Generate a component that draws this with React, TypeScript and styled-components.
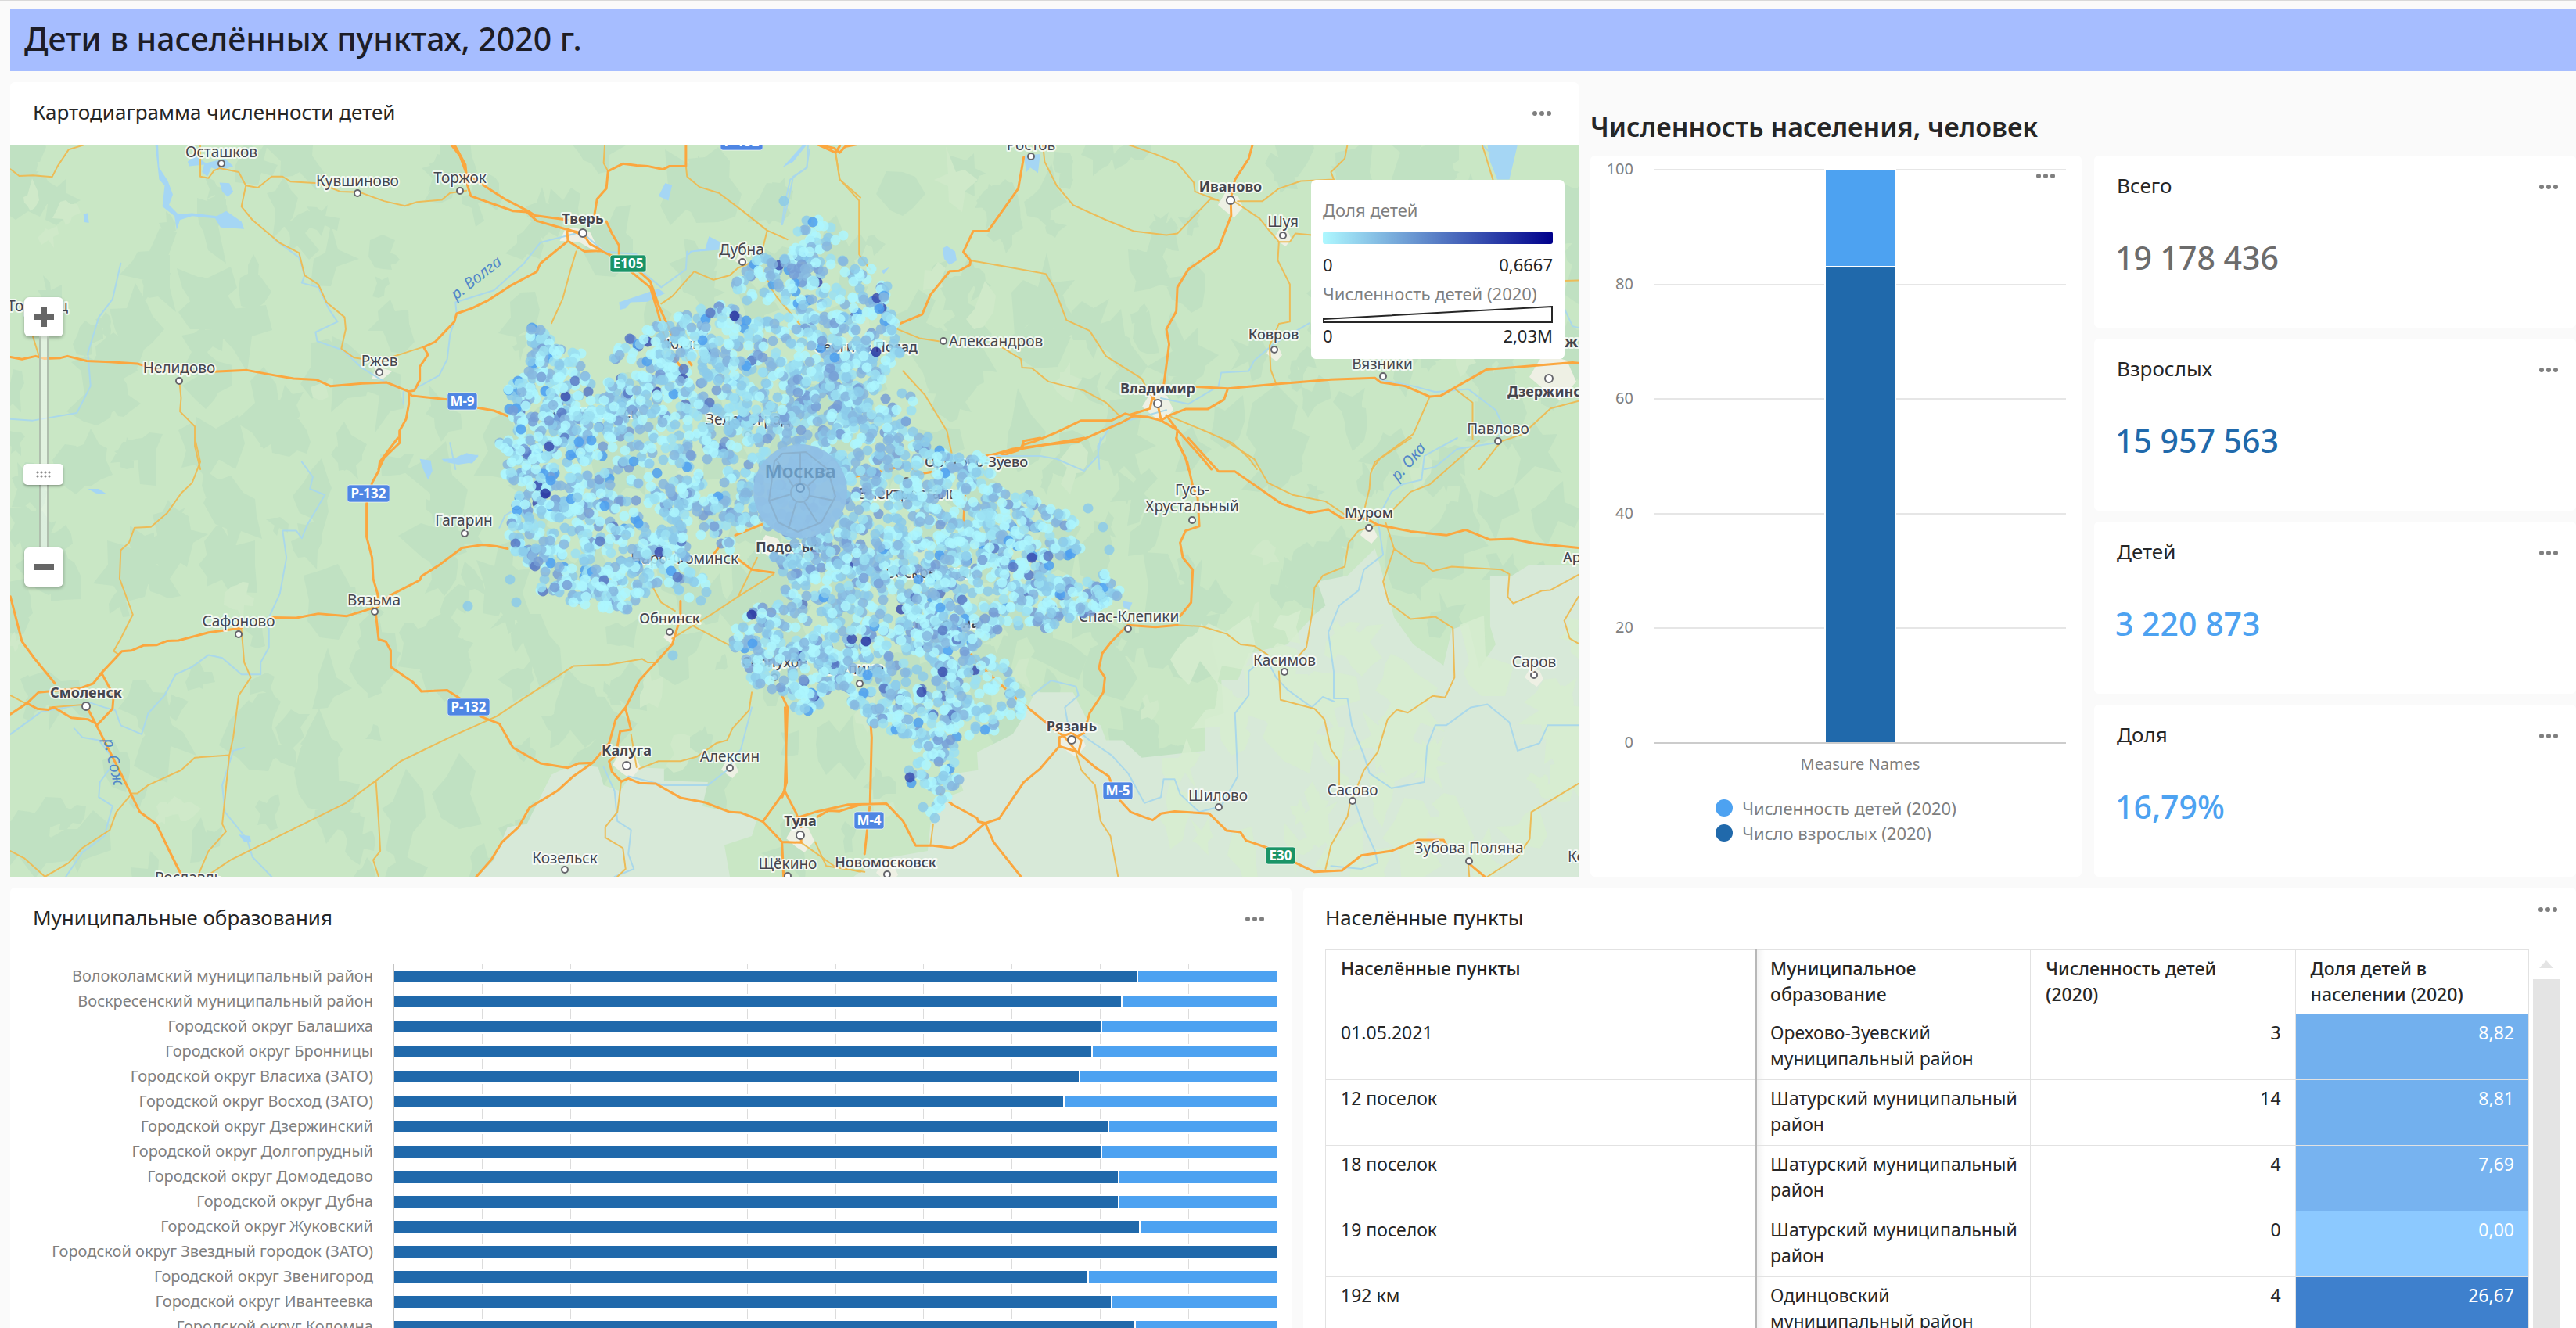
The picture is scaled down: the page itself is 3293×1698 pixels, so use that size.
import React from 'react';
import styled, { createGlobalStyle } from 'styled-components';

const GlobalStyle = createGlobalStyle`
  *, *::before, *::after { box-sizing: border-box; }
  body {
    margin: 0;
    background: #fafafa;
    color: #262626;
    font-family: "Noto Sans", "Open Sans", sans-serif;
  }
  h1, h2, h3, p, ul, dl, dd, dt { margin: 0; padding: 0; }
  ul { list-style: none; }
`;

const DARK = '#2069ab';
const LIGHT = '#4da2f1';

/* ---------- page ---------- */

const Page = styled.div`
  height: 100vh;
  overflow: hidden;
  display: flex;
  flex-direction: column;
  gap: 14px;
  padding: 11px 0 0 13px;
  border-top: 1px solid #d9d9d9;
`;

const Banner = styled.header`
  flex: none;
  height: 79px;
  display: flex;
  align-items: center;
  padding: 0 18px 6px;
  background: #a6bdff;
`;

const BannerTitle = styled.h1`
  font-size: 41px;
  line-height: 56px;
  font-weight: 500;
  color: #1d1d27;
`;

const TopGrid = styled.div`
  flex: none;
  display: grid;
  grid-template-columns: minmax(0, 2005fr) minmax(0, 1260fr);
  column-gap: 15px;
`;

const BottomGrid = styled.div`
  flex: none;
  display: grid;
  grid-template-columns: minmax(0, 1638fr) minmax(0, 1627fr);
  column-gap: 15px;
`;

const Card = styled.section`
  background: #fff;
  border-radius: 6px;
  overflow: hidden;
`;

const MapCard = styled(Card)`
  border-radius: 6px 6px 0 0;
`;

const CardHead = styled.div<{ $right?: number; $left?: number }>`
  display: flex;
  align-items: center;
  justify-content: space-between;
  height: 80px;
  padding: 0 ${p => p.$right ?? 35}px 0 ${p => p.$left ?? 29}px;
`;

const CardTitle = styled.h3`
  padding-bottom: 4px;
  font-size: 26px;
  line-height: 36px;
  font-weight: 400;
`;

const MenuButton = styled.button<{ $lift?: boolean }>`
  display: flex;
  align-items: center;
  justify-content: center;
  width: 24px;
  height: 24px;
  padding: 0;
  border: 0;
  background: none;
  align-self: ${p => (p.$lift ? 'flex-start' : 'center')};
  margin-top: ${p => (p.$lift ? 16 : 0)}px;
`;

function Menu({ lift }: { lift?: boolean }) {
  return (
    <MenuButton type="button" aria-label="Меню" $lift={lift}>
      <svg width="24" height="6" viewBox="0 0 24 6" fill="#7f7f7f">
        <circle cx="3" cy="3" r="3" />
        <circle cx="12" cy="3" r="3" />
        <circle cx="21" cy="3" r="3" />
      </svg>
    </MenuButton>
  );
}

/* ---------- map ---------- */

const MapFrame = styled.div`
  position: relative;
  height: 936px;
  overflow: hidden;
  background: #c9e7c5;
`;

const MapCanvas = styled.svg`
  display: block;
  width: 100%;
  height: 100%;
`;

const CityText = styled.text`
  paint-order: stroke;
  stroke: #ffffff;
  stroke-opacity: 0.75;
  stroke-width: 4px;
  stroke-linejoin: round;
  fill: #45454e;
`;

const BadgeText = styled.text`
  font-size: 17px;
  font-weight: 700;
  fill: #fff;
  text-anchor: middle;
`;

const RiverText = styled.text`
  font-size: 20px;
  font-style: italic;
  fill: #5288c8;
`;

function makeRandom(seed: number) {
  let a = seed;
  return () => {
    a = (a + 0x6d2b79f5) | 0;
    let t = Math.imul(a ^ (a >>> 15), 1 | a);
    t = (t + Math.imul(t ^ (t >>> 7), 61 | t)) ^ t;
    return ((t ^ (t >>> 14)) >>> 0) / 4294967296;
  };
}

type Pt = [number, number];

function inside([x, y]: Pt, poly: Pt[]) {
  let hit = false;
  for (let i = 0, j = poly.length - 1; i < poly.length; j = i++) {
    const [xi, yi] = poly[i];
    const [xj, yj] = poly[j];
    if (yi > y !== yj > y && x < ((xj - xi) * (y - yi)) / (yj - yi) + xi) hit = !hit;
  }
  return hit;
}

const REGION: Pt[] = [
  [1009, 284], [1039, 276], [1066, 285], [1080, 300], [1064, 312], [1064, 327], [1088, 337], [1114, 330],
  [1120, 340], [1112, 360], [1142, 368], [1133, 387], [1139, 403], [1150, 422], [1145, 437], [1153, 457],
  [1147, 480], [1127, 490], [1118, 503], [1140, 502], [1164, 498], [1171, 517], [1158, 537], [1180, 549],
  [1190, 563], [1205, 573], [1209, 582], [1234, 581], [1256, 581], [1268, 603], [1282, 620], [1286, 636],
  [1319, 630], [1335, 650], [1365, 650], [1378, 665], [1368, 680], [1384, 705], [1345, 718], [1352, 740],
  [1390, 742], [1415, 730], [1433, 742], [1433, 763], [1414, 777], [1379, 787], [1338, 805], [1280, 804],
  [1262, 824], [1247, 824], [1234, 842], [1291, 834], [1309, 849], [1304, 873], [1309, 914], [1282, 920],
  [1276, 940], [1242, 946], [1220, 947], [1222, 977], [1227, 1000], [1215, 1022], [1200, 1045], [1176, 1034],
  [1192, 1012], [1167, 1006], [1153, 973], [1169, 965], [1176, 941], [1138, 936], [1113, 926], [1086, 900],
  [1077, 880], [1052, 884], [1044, 913], [1020, 913], [1008, 891], [984, 880], [960, 883], [954, 857],
  [943, 840], [928, 820], [943, 800], [962, 770], [984, 772], [1002, 763], [998, 743], [984, 712],
  [1011, 709], [1017, 690], [982, 675], [973, 660], [944, 680], [937, 710], [921, 700], [907, 675],
  [873, 707], [902, 740], [920, 763], [899, 769], [866, 764], [836, 747], [822, 763], [803, 786],
  [757, 773], [732, 773], [721, 757], [686, 760], [694, 738], [669, 721], [648, 690], [653, 660],
  [657, 633], [634, 583], [631, 560], [648, 537], [648, 490], [674, 480], [680, 450], [667, 427],
  [670, 419], [701, 416], [707, 442], [756, 456], [759, 483], [781, 486], [808, 476], [832, 468],
  [785, 461], [781, 440], [825, 423], [838, 413], [874, 396], [905, 386], [940, 393], [957, 413],
  [1000, 405], [1032, 403], [1000, 385], [954, 390], [938, 367], [954, 339], [990, 321], [1012, 325], [1014, 300],
];

const PALETTE: [string, number][] = [
  ['#adf6fe', 0.34], ['#9be0f2', 0.17], ['#8ccaea', 0.18], ['#86b6df', 0.18],
  ['#769dd5', 0.06], ['#4c9ff0', 0.045], ['#5877c4', 0.018], ['#3a4cae', 0.007],
];

function buildDots() {
  const rnd = makeRandom(2020);
  const gauss = () => rnd() + rnd() + rnd() - 1.5;
  const dots: { x: number; y: number; c: string }[] = [];
  while (dots.length < 4100) {
    const cx = 610 + rnd() * 840;
    const cy = 260 + rnd() * 800;
    const count = 3 + Math.floor(rnd() * 5);
    for (let i = 0; i < count; i++) {
      const x = cx + gauss() * 34;
      const y = cy + gauss() * 34;
      if (!inside([x, y], REGION)) continue;
      const near = Math.hypot(x - 1040, y - 610) < 90 + rnd() * 110;
      let k = near ? 0.25 + rnd() * 0.68 : rnd();
      let c = PALETTE[0][0];
      for (const [color, share] of PALETTE) {
        c = color;
        if ((k -= share) < 0) break;
      }
      dots.push({ x: Math.round(x), y: Math.round(y), c });
    }
  }
  [[939, 404], [697, 631], [961, 786], [1107, 820], [1120, 450]].forEach(([x, y]) =>
    dots.push({ x, y, c: '#2631a0' }),
  );
  [[598, 775], [860, 838], [1195, 1046], [1180, 1032], [1002, 257], [660, 770], [1418, 703], [1410, 674], [1391, 650], [652, 741]].forEach(([x, y]) =>
    dots.push({ x, y, c: '#8ccaea' }),
  );
  return dots;
}

function buildPatches(seed: number, count: number, x0: number, y0: number, w: number, h: number, size: number) {
  const rnd = makeRandom(seed);
  const parts: string[] = [];
  for (let i = 0; i < count; i++) {
    const cx = x0 + rnd() * w;
    const cy = y0 + rnd() * h;
    const r = size * (0.4 + rnd());
    const n = 8 + Math.floor(rnd() * 6);
    const pts: string[] = [];
    for (let k = 0; k < n; k++) {
      const a = (k / n) * Math.PI * 2;
      const d = r * (0.25 + rnd() * 0.95);
      pts.push(`${Math.round(cx + Math.cos(a) * d * 0.9)} ${Math.round(cy + Math.sin(a) * d * 1.2)}`);
    }
    parts.push(`M${pts.join('L')}Z`);
  }
  return parts.join('');
}

const DOTS = buildDots();
const FOREST = buildPatches(7, 460, 13, 185, 2005, 936, 34);
const MEADOW = buildPatches(21, 30, 13, 185, 2005, 936, 24);
const STEPPE = buildPatches(5, 46, 1500, 780, 520, 340, 40);

/* Base-map tiles: every tile keeps its own drawing grid and is scaled into place. */
interface Tile {
  x: number;
  y: number;
  steppe?: string;
  water: string;
  rivers: string;
  minor: string;
  major: string;
}

const TILES: Tile[] = [
  {
    x: 0,
    y: 0,
    water:
      'M283 483L290 600L300 620L296 690L318 722L322 768L328 735L350 722L392 730L402 760L445 765L440 740L412 705L395 722L350 712L325 716L308 685L315 650L306 605L290 560L288 483Z' +
      'M355 520L375 545L410 530L425 555L400 570L385 560L378 590L368 575L372 550L345 555L342 540Z' +
      'M400 610L418 612L425 640L415 658L405 640Z M152 715L160 712L162 745L154 742Z M1212 612L1225 618L1218 670L1200 655Z' +
      'M1130 1035L1128 1010L1200 965L1212 980L1180 1008L1150 1010L1140 1030Z M1250 860L1258 838L1285 832L1292 790L1312 808L1310 835L1262 842Z M815 1545L840 1520L872 1520L862 1545L835 1552Z',
    rivers:
      'M500 800L545 860L555 920L550 945L580 960L600 1035L615 1075L575 1110L578 1140L625 1170L660 1230L700 1275L745 1310' +
      'M745 1310L800 1255L815 1200L820 1120L832 1048L830 1010L900 970L955 880L985 810L1060 775L1100 840L1160 850L1165 900L1205 960L1250 900L1252 840' +
      'M220 880L205 1000L180 1060L160 1180L165 1290L140 1380L60 1405L19 1400M1475 500L1470 560L1440 600L1430 680L1425 750M735 1310L735 1350M820 1480L830 1568',
    minor:
      'M19 565L35 588L60 586L95 591L105 555L125 500L155 483M365 483L365 590L380 595L390 570L400 562L435 575L448 620L470 627L495 590L515 590L530 607L580 612L620 640L655 642L700 672L738 688L760 675L805 668L820 645L850 637' +
      'M448 620L440 690L460 735L510 812L545 845L555 920L580 950L595 1010L628 1060L630 1100L622 1165L645 1195L690 1207L770 1160' +
      'M1102 483L1100 545L1108 572M1250 555L1252 590L1275 625L1310 645L1350 700L1398 770L1435 800M1398 770L1390 830L1380 870L1345 895L1330 920L1300 935L1265 907L1225 990L1205 1015' +
      'M1050 840L1040 900L1025 1000L1005 1080M327 1275L330 1330L328 1375L355 1425L355 1490L365 1568M60 1125L72 1196M1522 500L1530 600L1568 660M1390 900L1410 980L1465 1100',
    major:
      'M19 1193L40 1200L65 1190L80 1198L110 1196L123 1190L158 1206L200 1209L250 1215L290 1238L390 1242L450 1237L500 1254L535 1265L577 1269L602 1290L660 1281L705 1278L745 1308L750 1322L815 1335L870 1362L900 1372L925 1390' +
      'M822 483L838 520L850 580L890 630L920 665L965 708L975 720L1035 735M828 483L848 550L852 620L858 655L935 705L960 708L978 738L1030 765L1062 780' +
      'M1062 785L1033 765L1035 805L1065 840L1095 838L1115 855L1150 908M1062 780L1075 815L1095 835' +
      'M1250 483L1250 555L1220 555L1208 566L1180 555L1160 553L1135 547L1108 572L1105 630L1088 665L1083 720M1105 740L1115 780L1128 820L1128 855' +
      'M1035 805L985 880L978 908L930 955L890 1003L860 1030L832 1048L828 1075L793 1142L772 1160L780 1185L765 1225L765 1270L755 1305L745 1308L745 1350L740 1400L728 1440L728 1480L700 1530L690 1568' +
      'M1150 908L1185 960L1200 1050L1215 1160L1250 1250M1165 908L1185 940L1200 1020L1225 1120L1260 1220M1490 483L1520 495L1530 510L1540 490L1568 480',
  },
  {
    x: 1000,
    y: 0,
    water:
      'M1285 483L1340 483L1325 600L1303 600L1290 540Z M292 830L300 822L315 840L318 870L305 885L295 865Z M440 520L470 515L466 578L452 560L445 575Z M180 905L195 893L185 915Z M0 560L20 540L45 483L38 483Z',
    rivers:
      'M960 1080L895 1150L860 1205L850 1240L800 1245L795 1290L740 1350L690 1330M700 1370L600 1420L575 1490L578 1568M1080 1265L1150 1290L1190 1310L1250 1300L1300 1370L1315 1430L1300 1480L1230 1500L1190 1560L1170 1568M1425 1030L1440 1090L1451 1095' +
      'M47 483L45 560L20 590L10 680L0 750M1275 483L1290 510',
    minor:
      'M475 483L478 540L500 620L530 685L590 735L640 772L700 785L720 780L780 665L790 668M630 483L680 515L720 545L750 610L752 640L795 670' +
      'M1030 483L1025 530L1000 575L1005 600L945 605L905 630L875 672L830 672M817 665L870 730L885 765L905 808L925 808L935 780L965 785' +
      'M905 808L903 870L925 950L925 1075L905 1082L888 1155L890 1235L900 1283M343 870L420 895L480 915L495 960L518 1070L560 1105L590 1190L655 1265L670 1320' +
      'M400 1160L435 1200L437 1228L455 1230L485 1275L550 1305L590 1345L615 1390M210 1100L250 1130L285 1140M220 1240L260 1320L300 1440L315 1568' +
      'M1225 1298L1258 1345L1258 1468M1180 1325L1150 1450L1090 1530L1075 1568M705 1390L770 1440L820 1480L850 1530L865 1568M97 510L105 600L140 670L140 850L160 900' +
      'M1275 483L1280 510L1295 600M1451 1340L1400 1365L1350 1450L1310 1475L1270 1568M1425 938L1451 937',
    major:
      'M440 525L430 630L375 772L348 772L330 842L343 870L342 885L322 905L305 906L270 985L255 1050L210 1085M857 483L850 530L825 600L817 665L818 720L795 830L740 900L720 960L718 1040L700 1100L705 1150L695 1290' +
      'M755 1292L812 1298L900 1283L1000 1268L1080 1263L1090 1277L1135 1290L1180 1325L1200 1322L1283 1235L1440 1211L1451 1213M812 1298L805 1335L775 1367L735 1367L705 1388L690 1405L665 1393L640 1390L620 1410L540 1475L485 1485L420 1500L365 1530' +
      'M640 1390L625 1382L600 1405L545 1405L500 1445L460 1475L440 1485L430 1505L370 1540M700 1388L720 1437L718 1470L735 1530L740 1568M690 1405L720 1437L765 1530L782 1568M684 1350L675 1325L670 1365L635 1385M684 1350L690 1400M65 483L97 510L105 487',
  },
  {
    x: 0,
    y: 560,
    steppe:
      'M1005 1125L1045 1090L1090 1100L1100 1160L1130 1180L1160 1100L1210 1105L1210 1145L1290 1150L1280 1230L1380 1270L1370 1330L1320 1360L1330 1466L870 1466L900 1410L925 1300L960 1290Z',
    water: 'M765 70L785 75L788 110L780 140L770 100Z M805 70L835 68L850 50L872 60L860 85L835 80L810 80Z M160 170L180 170L195 188L175 185Z M435 1325L455 1330L458 1350L445 1350Z',
    rivers:
      'M550 80L570 130L565 170L592 190L560 290L550 335L540 310L515 310L522 400L510 520L490 600L490 700L475 750L475 790L440 790L405 735L380 725L350 765L320 790L300 860L270 920L258 990L220 960L210 910L190 900L165 885L75 915L19 990' +
      'M135 970L150 1000L180 1010L210 1080L182 1150L180 1200L205 1230L190 1330L150 1385L120 1466M445 1035L425 1045L405 1160L410 1250L450 1340L460 1400L495 1466' +
      'M1100 1100L1120 1180L1125 1280L1150 1310L1145 1390L1155 1440L1120 1466M1145 1130L1210 1160L1290 1160L1325 1110L1350 1040L1370 900M910 300L920 260L945 230',
    minor:
      'M355 0L365 80L350 150L330 185L305 250L275 297L245 300L235 350L220 375L218 470L242 590L220 670L207 712L215 722M440 640L445 750L457 800L435 860L425 1000L418 1060L355 1068L330 1110L270 1160L250 1188L240 1188L212 1250L200 1310L150 1370L125 1420L82 1466L45 1405L19 1380' +
      'M418 1058L405 1290L412 1315L380 1380L360 1466M375 1466L420 1410L630 1220L685 1145L730 1080L820 1000L905 930L950 875L1045 762L1110 757L1170 738L1180 750L1198 750M685 1145L690 1280L693 1380L680 1410L690 1466' +
      'M1190 500L1205 550L1230 578M1225 670L1300 585L1345 530L1410 455M1380 400L1345 530M1265 630L1335 698M1370 850L1365 910L1335 970L1325 1010L1305 1020L1270 1065L1240 1080L1200 1080L1165 1105' +
      'M1132 1148L1125 1250L1103 1300L1103 1335L1135 1370L1140 1440L1125 1466M19 860L50 890M90 900L160 890M1460 1352L1520 1430L1568 1450M1150 990L1160 1100',
    major:
      'M725 0L692 80L690 110L678 150L668 220L668 330L678 400L680 470L688 520L690 560L682 580M925 370L905 362L880 357L842 367L800 425L768 462L765 475L712 525L690 560' +
      'M680 568L632 595L580 587L540 601L495 600M440 635L380 650L325 677L305 678L285 692L262 693L240 710L222 713L185 785L170 820L145 837L125 840L70 850L50 885L19 923' +
      'M19 530L40 680L62 735L100 820M48 885L68 905L88 908L98 900L130 935L160 940L178 957L205 905L207 860L185 785M157 895L175 957L220 1120L255 1250L285 1290L310 1385L332 1466' +
      'M685 590L690 673L703 680L712 710L712 765L752 815L768 847L815 843L838 870M875 930L910 955L935 1035L985 1087L1035 1102L1055 1087L1080 1085' +
      'M868 1466L895 1410L915 1350L945 1300L965 1235L1015 1180L1045 1130L1080 1085L1110 1020L1122 940L1140 900L1165 810L1200 740L1225 690L1240 600L1240 545' +
      'M1140 905L1150 975L1130 980L1122 1060L1110 1080L1115 1115L1132 1148L1145 1138L1165 1153L1195 1155L1240 1202L1285 1218L1330 1250L1350 1252L1375 1270L1390 1282L1430 1180L1435 900L1425 860' +
      'M1390 1282L1425 1350L1460 1352L1460 1340M1430 1180L1450 1250L1460 1300M1425 1350L1428 1466M1490 1265L1510 1245L1530 1247L1568 1225M1340 325L1400 280M1300 390L1320 340M1345 405L1370 440L1410 450',
  },
  {
    x: 1000,
    y: 560,
    steppe:
      'M1451 425L1360 425L1330 460L1290 462L1290 630L1300 690L1270 770L1250 620L1220 640L1205 760L1150 690L1115 600L1100 500L1090 430L1080 370L1030 460L975 480L990 560L970 590L920 690L850 720L830 810L800 810L805 920L770 940L770 1045L655 1068L620 1010L590 1010L580 960L555 940L530 850L460 850L440 930L420 990L355 1050L357 1110L320 1120L330 1180L300 1200L270 1290L265 1380L170 1410L130 1466L1451 1466Z',
    water: 'M620 545L638 550L632 575L622 565Z',
    rivers:
      'M1230 0L1170 60L1165 140L1130 155L1110 180L1085 270L1095 390L1060 440L1050 510L1015 560L995 650L1005 780L1005 870L1030 870L1038 960L1060 1060L1070 1120L1110 1170L1170 1150L1175 1030L1190 960L1210 960L1255 900L1285 890L1325 950L1340 1045L1380 1020L1395 960L1451 960' +
      'M540 860L515 900L520 950L560 1010L600 1060L630 1120L660 1220L690 1200L695 1140L715 1140L725 1190L760 1250L800 1230L830 1130L825 920L850 860L850 780L880 730L900 800L920 840L965 900L985 865L1005 880' +
      'M1040 1200L1060 1300L1080 1380L1085 1420L1055 1440L1000 1430M455 860L490 810L535 830L540 860M370 60L470 60L500 70L550 110L575 60L580 0',
    minor:
      'M720 625L765 630L810 655L835 690L860 695L885 725M905 780L908 875L970 905L988 940L1000 1040L1015 1080L1015 1190M1035 1215L1030 1265L1000 1360L990 1440M1146 0L1080 80L1072 120L1070 170L1062 230' +
      'M1085 290L1050 310L1032 350L1025 430L985 460L970 500L965 590L955 700L940 730M1100 285L1115 370L1150 415L1170 420L1185 445L1220 430L1310 440L1325 455L1322 530L1332 553L1385 510L1400 508L1451 457' +
      'M1115 370L1095 480L1105 550L1145 605L1190 597L1222 635L1225 800L1208 867L1185 862L1140 918L1120 908L1103 940L1085 1050L1060 1110L1040 1200M800 0L860 70L885 150L930 190L990 212L1030 262' +
      'M1270 10L1180 155L1145 180L1110 245M1451 1155L1365 1250L1362 1340L1340 1400L1285 1466M535 1050L545 1110L570 1160L580 1280L598 1330L612 1466M1451 530L1425 610L1435 670L1451 687M275 1290L270 1362M60 1350L80 1430L150 1450M1250 1420L1252 1466',
    major:
      'M365 62L440 35L550 0M435 38L440 10L470 0M718 0L738 80L748 160L757 200L760 295L735 310L725 350L730 400L748 440L745 550L725 595' +
      'M740 0L795 112L825 112L910 220L960 250L995 240L1020 268L1065 270L1085 290L1145 312L1210 325L1245 307L1290 340L1330 337L1370 352L1451 367' +
      'M720 625L680 632L630 625L600 680L583 720L577 770L588 800L585 850L560 920L550 985L528 1008M330 690L360 760L420 860L480 950L515 1000L535 1045L570 1100L595 1130L600 1155' +
      'M528 985L505 1000L505 1030L540 1050L545 1010L528 985M505 1030L470 1105L440 1150L395 1272L370 1287L330 1350L308 1370L275 1362L243 1362L220 1280L190 1222L120 1225L60 1250L25 1270' +
      'M275 1170L310 1225L355 1270L357 1282L370 1287L385 1350L435 1466M615 1210L635 1250L675 1277L690 1255L715 1248L778 1255L810 1312L835 1317L845 1345L885 1370' +
      'M930 1415L970 1450L1020 1445L1055 1395L1110 1380L1160 1343L1205 1343L1215 1375M1250 1420L1280 1466M160 1220L163 1000L160 930M160 1220L150 1390M5 900L8 1150L0 1200M120 135L230 90L250 120L350 90M330 300L335 110',
  },
];

const TOWN_AREAS =
  'M1030 765L1045 760L1075 775L1085 812L1100 835L1080 835L1055 808L1020 805Z M685 1225L715 1240L695 1270L678 1265Z';

interface City {
  n: string;
  x: number;
  y: number;
  m?: [number, number];
  w?: number;
  s?: number;
  a?: 'start' | 'end';
}

const CITIES: City[] = [
  { n: 'Осташков', x: 283, y: 201, m: [283, 209] },
  { n: 'Кувшиново', x: 457, y: 238, m: [457, 247] },
  { n: 'Торжок', x: 588, y: 234, m: [588, 244] },
  { n: 'Тверь', x: 745, y: 286, m: [745, 298], w: 700 },
  { n: 'Дубна', x: 948, y: 326, m: [949, 335] },
  { n: 'Ржев', x: 485, y: 468, m: [485, 476] },
  { n: 'Нелидово', x: 229, y: 477, m: [229, 487] },
  { n: 'Торопец', x: 48, y: 398 },
  { n: 'Клин', x: 874, y: 446, w: 500 },
  { n: 'Сергиев Посад', x: 1107, y: 450, w: 500 },
  { n: 'Волоколамск', x: 755, y: 534 },
  { n: 'Зеленоград', x: 956, y: 543, m: [956, 556] },
  { n: 'Ростов', x: 1318, y: 192, m: [1318, 200] },
  { n: 'Иваново', x: 1573, y: 245, m: [1573, 256], w: 700 },
  { n: 'Шуя', x: 1640, y: 290, m: [1640, 301] },
  { n: 'Александров', x: 1213, y: 443, m: [1206, 436], a: 'start' },
  { n: 'Ковров', x: 1628, y: 434, m: [1629, 447], w: 500 },
  { n: 'Вязники', x: 1767, y: 472, m: [1768, 481] },
  { n: 'Дзержинск', x: 1927, y: 507, m: [1980, 484], w: 700, a: 'start' },
  { n: 'ж', x: 2000, y: 444, w: 700, a: 'start', s: 20 },
  { n: 'Владимир', x: 1480, y: 503, m: [1480, 516], w: 700 },
  { n: 'Павлово', x: 1915, y: 555, m: [1915, 564] },
  { n: 'Орехово-Зуево', x: 1248, y: 597, w: 500, m: [1159, 615] },
  { n: 'Гагарин', x: 593, y: 672, m: [594, 682] },
  { n: 'Вязьма', x: 478, y: 774, m: [479, 782] },
  { n: 'Сафоново', x: 305, y: 801, m: [305, 811] },
  { n: 'Смоленск', x: 110, y: 892, m: [110, 903], w: 700 },
  { n: 'Обнинск', x: 856, y: 797, m: [856, 808], w: 500 },
  { n: 'Калуга', x: 801, y: 966, m: [801, 979], w: 700 },
  { n: 'Алексин', x: 933, y: 974, m: [933, 982] },
  { n: 'Тула', x: 1023, y: 1056, m: [1023, 1068], w: 700 },
  { n: 'Козельск', x: 722, y: 1104, m: [722, 1112] },
  { n: 'Щёкино', x: 1007, y: 1111, m: [1007, 1120] },
  { n: 'Рославль', x: 241, y: 1129 },
  { n: 'Подольск', x: 966, y: 706, m: [1010, 718], w: 700, a: 'start' },
  { n: 'Наро-Фоминск', x: 944, y: 721, a: 'end' },
  { n: 'Серпухов', x: 990, y: 853, w: 500, m: [990, 866] },
  { n: 'Ступино', x: 1092, y: 862, m: [1099, 874] },
  { n: 'Коломна', x: 1252, y: 803, w: 700, a: 'end', m: [1211, 814] },
  { n: 'Электросталь', x: 1098, y: 638, a: 'start' },
  { n: 'Воскресенск', x: 1190, y: 739 },
  { n: 'Гусь-', x: 1524, y: 633 },
  { n: 'Хрустальный', x: 1524, y: 654, m: [1524, 665] },
  { n: 'Муром', x: 1750, y: 662, m: [1750, 675], w: 500 },
  { n: 'Ар', x: 1998, y: 719, a: 'start', w: 500 },
  { n: 'Спас-Клепики', x: 1443, y: 795, m: [1442, 804] },
  { n: 'Касимов', x: 1642, y: 851, m: [1642, 859] },
  { n: 'Саров', x: 1961, y: 853, m: [1961, 863] },
  { n: 'Рязань', x: 1370, y: 935, m: [1370, 946], w: 700 },
  { n: 'Шилово', x: 1557, y: 1024, m: [1558, 1032] },
  { n: 'Сасово', x: 1729, y: 1017, m: [1729, 1024] },
  { n: 'Зубова Поляна', x: 1878, y: 1091, m: [1878, 1101] },
  { n: 'Новомосковск', x: 1132, y: 1109, m: [1134, 1118], w: 500 },
  { n: 'Ко', x: 2004, y: 1102, a: 'start' },
];

const BADGES: { t: string; x: number; y: number; w: number; c: string }[] = [
  { t: 'Р-132', x: 948, y: 181, w: 54, c: '#4f86e3' },
  { t: 'Е105', x: 803, y: 337, w: 46, c: '#1a9467' },
  { t: 'М-9', x: 591, y: 513, w: 38, c: '#4f86e3' },
  { t: 'Р-132', x: 471, y: 631, w: 54, c: '#4f86e3' },
  { t: 'Р-132', x: 599, y: 904, w: 54, c: '#4f86e3' },
  { t: 'М-5', x: 1429, y: 1011, w: 38, c: '#4f86e3' },
  { t: 'М-4', x: 1111, y: 1049, w: 38, c: '#4f86e3' },
  { t: 'Е30', x: 1637, y: 1094, w: 38, c: '#1a9467' },
];

const TOWN_CENTERS: [number, number, number][] = [
  [1573, 262, 16], [1640, 304, 11], [1629, 452, 10], [1480, 520, 20], [1985, 482, 30], [856, 815, 8], [801, 978, 18],
  [1023, 1072, 18], [1370, 950, 18], [1750, 684, 11], [1961, 866, 12], [1134, 1116, 14], [933, 984, 11], [948, 334, 8],
  [1220, 818, 14], [985, 700, 16],
];

const TILE_SCALE = 'scale(0.7015 0.38266)';

function MapDrawing() {
  return (
    <MapCanvas viewBox="13 185 2005 936" preserveAspectRatio="xMidYMid slice" role="img" aria-label="Карта">
      <path d={FOREST} fill="#c0e1c2" />
      <path d={MEADOW} fill="#cfe9c9" />
      {TILES.map(t => (
        <g key={`s${t.x}-${t.y}`} transform={`translate(${t.x} ${t.y}) ${TILE_SCALE}`}>
          {t.steppe && <path d={t.steppe} fill="#d7e9d8" />}
        </g>
      ))}
      <path d={STEPPE} fill="#d7edd0" opacity="0.8" />
      <path transform={TILE_SCALE} d={TOWN_AREAS} fill="#eef0e4" />
      {TOWN_CENTERS.map(([x, y, r]) => (
        <path
          key={`${x}-${y}`}
          fill="#eef0e4"
          d={`M${x - r} ${y}L${x - r * 0.4} ${y - r}L${x + r * 0.6} ${y - r * 0.7}L${x + r} ${y + r * 0.2}L${x + r * 0.3} ${y + r}L${x - r * 0.3} ${y + r * 0.6}Z`}
        />
      ))}
      {TILES.map(t => (
        <g
          key={`r${t.x}-${t.y}`}
          transform={`translate(${t.x} ${t.y}) ${TILE_SCALE}`}
          fill="none"
          strokeLinejoin="round"
          strokeLinecap="round"
        >
          <path d={t.water} fill="#a5d6f4" />
          <path d={t.rivers} stroke="#aad8ea" strokeWidth="2" vectorEffect="non-scaling-stroke" />
          <path d={t.minor} stroke="#ecbc58" strokeWidth="2" vectorEffect="non-scaling-stroke" />
          <path d={t.major} stroke="#fba73f" strokeWidth="3" vectorEffect="non-scaling-stroke" />
        </g>
      ))}
      {BADGES.map(b => (
        <g key={`${b.t}-${b.x}`}>
          <rect x={b.x - b.w / 2} y={b.y - 11} width={b.w} height="22" rx="3" fill={b.c} stroke="#fff" strokeOpacity="0.6" />
          <BadgeText x={b.x} y={b.y + 6}>{b.t}</BadgeText>
        </g>
      ))}
      <RiverText transform="translate(583 384) rotate(-38)">р. Волга</RiverText>
      <RiverText transform="translate(1787 616) rotate(-49)">р. Ока</RiverText>
      <RiverText transform="translate(132 946) rotate(77)">р. Сож</RiverText>
      {CITIES.filter(c => c.m).map(c => (
        <circle
          key={c.n}
          cx={c.m![0]}
          cy={c.m![1]}
          r={c.w === 700 ? 5 : 4}
          fill="#fff"
          stroke="#66666c"
          strokeWidth="2"
        />
      ))}
      {CITIES.map(c => (
        <CityText
          key={c.n}
          x={c.x}
          y={c.y}
          fontSize={c.s ?? (c.w ? 18 : 19)}
          fontWeight={c.w ?? 400}
          textAnchor={c.a ?? 'middle'}
        >
          {c.n}
        </CityText>
      ))}
      <g fillOpacity="0.84">
        {DOTS.map((d, i) => (
          <circle key={i} cx={d.x} cy={d.y} r="6.5" fill={d.c} />
        ))}
      </g>
      <circle cx="1023" cy="628" r="60" fill="#91c0e6" fillOpacity="0.94" />
      <g fill="none" stroke="#89aecb" strokeWidth="2" opacity="0.8">
        <circle cx="1023" cy="630" r="12" />
        <path d="M990 590L1000 580L1030 578L1058 600L1068 635L1050 668L1020 680L995 668L983 640Z" />
        <path d="M1023 618V578M1032 622L1056 600M1035 634L1066 640M1028 642L1046 670M1018 642L1008 676M1011 632L984 640M1014 622L994 590" />
      </g>
      <text x="1023" y="611" fontSize="24" fontWeight="600" textAnchor="middle" fill="#6998bf">Москва</text>
      <circle cx="1023" cy="624" r="5" fill="#9cc7e8" stroke="#6e9cc4" strokeWidth="2" />
    </MapCanvas>
  );
}

const ZoomControl = styled.div`
  position: absolute;
  left: 17px;
  top: 195px;
  display: flex;
  flex-direction: column;
  align-items: center;
`;

const ZoomButton = styled.button`
  display: flex;
  align-items: center;
  justify-content: center;
  width: 50px;
  height: 50px;
  padding: 0;
  border: 0;
  border-radius: 6px;
  background: #fff;
  box-shadow: 0 2px 4px rgba(0, 0, 0, 0.3);
`;

const ZoomRange = styled.input`
  appearance: none;
  writing-mode: vertical-lr;
  direction: rtl;
  width: 51px;
  height: 270px;
  margin: 0;
  background: linear-gradient(90deg, #b0bfae 2px, rgba(255, 255, 255, 0.45) 2px 10px, #b0bfae 10px) center / 12px 100%
    no-repeat;

  &::-webkit-slider-thumb {
    appearance: none;
    width: 51px;
    height: 27px;
    border-radius: 5px;
    box-shadow: 0 2px 3px rgba(0, 0, 0, 0.3);
    background:
      radial-gradient(circle at 2px 2px, #8a8a8a 1px, transparent 2px) 16px 9px / 5px 5px no-repeat,
      radial-gradient(circle at 2px 2px, #8a8a8a 1px, transparent 2px) 21px 9px / 5px 5px no-repeat,
      radial-gradient(circle at 2px 2px, #8a8a8a 1px, transparent 2px) 26px 9px / 5px 5px no-repeat,
      radial-gradient(circle at 2px 2px, #8a8a8a 1px, transparent 2px) 31px 9px / 5px 5px no-repeat,
      radial-gradient(circle at 2px 2px, #8a8a8a 1px, transparent 2px) 16px 14px / 5px 5px no-repeat,
      radial-gradient(circle at 2px 2px, #8a8a8a 1px, transparent 2px) 21px 14px / 5px 5px no-repeat,
      radial-gradient(circle at 2px 2px, #8a8a8a 1px, transparent 2px) 26px 14px / 5px 5px no-repeat,
      radial-gradient(circle at 2px 2px, #8a8a8a 1px, transparent 2px) 31px 14px / 5px 5px no-repeat,
      #fff;
  }
`;

const MapLegend = styled.div`
  position: absolute;
  top: 45px;
  right: 18px;
  width: 324px;
  padding: 22px 15px 14px;
  border-radius: 6px;
  background: #fff;
  font-size: 22px;
  line-height: 32px;
`;

const LegendCaption = styled.p`
  color: #7f7f7f;
`;

const GradientBar = styled.div`
  height: 16px;
  margin: 12px 0 10px;
  border-radius: 3px;
  background: linear-gradient(90deg, #aef8ff, #00008b);
`;

const LegendScale = styled.div<{ $gap: number }>`
  display: flex;
  justify-content: space-between;
  margin-bottom: ${p => p.$gap}px;
`;

/* ---------- population ---------- */

const Population = styled.div`
  display: flex;
  flex-direction: column;
`;

const SectionTitle = styled.h2`
  height: 94px;
  padding-top: 33px;
  font-size: 34px;
  line-height: 48px;
  font-weight: 600;
`;

const PopulationGrid = styled.div`
  flex: 1;
  display: grid;
  grid-template-columns: minmax(0, 628fr) minmax(0, 616fr);
  column-gap: 16px;
`;

const ChartCard = styled(Card)`
  display: flex;
  flex-direction: column;
  padding: 3px 20px 0;
`;

const ChartArea = styled.div`
  display: grid;
  grid-template-columns: 35px minmax(0, 1fr);
  column-gap: 27px;
`;

const YAxis = styled.ul`
  grid-area: 1 / 1;
  display: flex;
  flex-direction: column;
  justify-content: space-between;
  height: 761px;
  font-size: 20px;
  line-height: 28px;
  color: #7f7f7f;
  text-align: right;
`;

const StackLayer = styled.div`
  grid-area: 1 / 2;
  min-width: 0;
  margin: 14px 0 12px;
`;

const LineLayer = styled(StackLayer)`
  display: flex;
  flex-direction: column;
  border-bottom: 2px solid #cccccc;
`;

const GridLine = styled.div`
  flex: 1;
  border-top: 2px solid #e6e6e6;
`;

const ColumnLayer = styled(StackLayer)`
  display: flex;
  justify-content: center;
`;

const Column = styled.div`
  display: flex;
  flex-direction: column;
  gap: 2px;
  width: 92px;
  margin-bottom: 2px;
  padding-top: 1px;
  border: solid #fff;
  border-width: 0 2px;
  background: #fff;
`;

const ColumnPart = styled.div<{ $color: string }>`
  background: ${p => p.$color};
`;

const MenuLayer = styled(StackLayer)`
  display: flex;
  align-items: flex-start;
  justify-content: flex-end;
  padding-right: 14px;
`;

const ChartMenuSlot = styled.div`
  height: 18px;
  display: flex;
  align-items: center;
`;

const AxisName = styled.p`
  padding-left: 62px;
  font-size: 20px;
  line-height: 28px;
  color: #7f7f7f;
  text-align: center;
`;

const SeriesLegend = styled.ul`
  align-self: center;
  margin-top: 26px;
  font-size: 22px;
  line-height: 32px;
  color: #7f7f7f;
`;

const SeriesItem = styled.li<{ $color: string }>`
  display: flex;
  align-items: center;
  gap: 12px;

  &::before {
    content: "";
    width: 22px;
    height: 22px;
    border-radius: 50%;
    background: ${p => p.$color};
  }
`;

const Indicators = styled.div`
  display: grid;
  grid-template-rows: repeat(4, 220px);
  row-gap: 14px;
`;

const IndicatorValue = styled.p<{ $color: string }>`
  padding: 22px 27px 0;
  font-size: 41px;
  line-height: 56px;
  font-weight: 500;
  color: ${p => p.$color};
`;

/* ---------- municipalities ---------- */

const BarsCard = styled(Card)`
  display: flex;
  flex-direction: column;
`;

const BarsArea = styled.div`
  display: grid;
  grid-template-columns: 464px minmax(0, 1fr);
  column-gap: 26px;
  padding: 17px 18px 0 0;
`;

const BarLabels = styled.ul`
  grid-area: 1 / 1;
  font-size: 20px;
  line-height: 32px;
  color: #7f7f7f;
  text-align: right;
  white-space: nowrap;
`;

const BarGrid = styled.div`
  grid-area: 1 / 2;
  display: grid;
  grid-template-columns: repeat(10, minmax(0, 1fr));
  border-left: 1px solid #c4c4c4;
`;

const BarGridCell = styled.div`
  border-right: 1px solid #dcdcdc;
`;

const Bars = styled.ul`
  grid-area: 1 / 2;
  padding-left: 1px;
`;

const BarRow = styled.li`
  display: flex;
  align-items: center;
  height: 32px;
`;

const BarPart = styled.div<{ $color: string }>`
  height: 15px;
  background: ${p => p.$color};
  box-shadow: 0 2px 0 #fff, 0 -2px 0 #fff;

  & + & {
    flex: 1;
    border-left: 2px solid #fff;
  }
`;

/* ---------- settlements ---------- */

const TableArea = styled.div`
  display: flex;
  gap: 5px;
  margin-top: -1px;
  padding: 0 21px 0 28px;
`;

const DataTable = styled.table`
  flex: 1;
  min-width: 0;
  table-layout: fixed;
  border-collapse: collapse;
  font-size: 23px;
  line-height: 33px;
`;

const Th = styled.th`
  height: 82px;
  padding: 7px 19px 8px;
  border: 1px solid #e2e2e2;
  text-align: left;
  vertical-align: top;
  font-weight: 500;

  &:nth-child(2) {
    padding-left: 17px;
    border-left: 2px solid #b8b8b8;
    background: linear-gradient(90deg, #f2f2f2, #fff 10px);
  }

  &:nth-child(3) {
    padding-right: 80px;
  }
`;

const Td = styled.td<{ $align?: 'right'; $fill?: string }>`
  height: 84px;
  padding: 7px 18px 8px 19px;
  border: 1px solid #e2e2e2;
  vertical-align: top;
  text-align: ${p => p.$align ?? 'left'};
  color: ${p => (p.$fill ? '#fff' : 'inherit')};
  background: ${p => p.$fill ?? '#fff'};

  &:nth-child(2) {
    padding: 7px 0 8px 17px;
    border-left: 2px solid #b8b8b8;
    background: linear-gradient(90deg, #f2f2f2, #fff 10px);
  }
`;

const ScrollTrack = styled.div`
  width: 34px;
  display: flex;
  flex-direction: column;
  align-items: center;
  padding-top: 14px;
  gap: 14px;
`;

const ScrollThumb = styled.div`
  flex: 1;
  width: 34px;
  background: #e4e4e4;
`;

const MUNICIPALITIES: [string, number][] = [
  ['Волоколамский муниципальный район', 84.1],
  ['Воскресенский муниципальный район', 82.3],
  ['Городской округ Балашиха', 80],
  ['Городской округ Бронницы', 78.9],
  ['Городской округ Власиха (ЗАТО)', 77.5],
  ['Городской округ Восход (ЗАТО)', 75.7],
  ['Городской округ Дзержинский', 80.8],
  ['Городской округ Долгопрудный', 80],
  ['Городской округ Домодедово', 81.9],
  ['Городской округ Дубна', 81.9],
  ['Городской округ Жуковский', 84.3],
  ['Городской округ Звездный городок (ЗАТО)', 100],
  ['Городской округ Звенигород', 78.5],
  ['Городской округ Ивантеевка', 81.1],
  ['Городской округ Коломна', 83.8],
];

const TICKS = [100, 80, 60, 40, 20, 0];

const INDICATORS = [
  { title: 'Всего', value: '19 178 436', color: '#6c6c6c' },
  { title: 'Взрослых', value: '15 957 563', color: DARK },
  { title: 'Детей', value: '3 220 873', color: LIGHT },
  { title: 'Доля', value: '16,79%', color: LIGHT },
];

const SETTLEMENTS = [
  { name: '01.05.2021', area: 'Орехово-Зуевский муниципальный район', kids: 3, share: '8,82', fill: '#72b0ee' },
  { name: '12 поселок', area: 'Шатурский муниципальный район', kids: 14, share: '8,81', fill: '#72b0ee' },
  { name: '18 поселок', area: 'Шатурский муниципальный район', kids: 4, share: '7,69', fill: '#77b3f0' },
  { name: '19 поселок', area: 'Шатурский муниципальный район', kids: 0, share: '0,00', fill: '#8cc9ff' },
  { name: '192 км', area: 'Одинцовский муниципальный район', kids: 4, share: '26,67', fill: '#3e80cd' },
];

export default function App() {
  return (
    <Page>
      <GlobalStyle />
      <Banner>
        <BannerTitle>Дети в населённых пунктах, 2020 г.</BannerTitle>
      </Banner>

      <TopGrid>
        <MapCard>
          <CardHead>
            <CardTitle>Картодиаграмма численности детей</CardTitle>
            <Menu />
          </CardHead>
          <MapFrame>
            <MapDrawing />
            <ZoomControl>
              <ZoomButton type="button" aria-label="Приблизить">
                <svg width="26" height="26" viewBox="0 0 26 26" fill="#666">
                  <path d="M9 0h8v9h9v8h-9v9H9v-9H0V9h9z" />
                </svg>
              </ZoomButton>
              <ZoomRange type="range" min={0} max={100} defaultValue={33} aria-label="Масштаб" />
              <ZoomButton type="button" aria-label="Отдалить">
                <svg width="26" height="8" viewBox="0 0 26 8" fill="#666">
                  <path d="M0 0h26v8H0z" />
                </svg>
              </ZoomButton>
            </ZoomControl>
            <MapLegend>
              <LegendCaption>Доля детей</LegendCaption>
              <GradientBar />
              <LegendScale $gap={5}>
                <span>0</span>
                <span>0,6667</span>
              </LegendScale>
              <LegendCaption>Численность детей (2020)</LegendCaption>
              <svg width="294" height="22" viewBox="0 0 294 22" display="block">
                <path d="M1 17L293 1V21H1Z" fill="#fff" stroke="#262626" strokeWidth="2" />
              </svg>
              <LegendScale $gap={0}>
                <span>0</span>
                <span>2,03M</span>
              </LegendScale>
            </MapLegend>
          </MapFrame>
        </MapCard>

        <Population>
          <SectionTitle>Численность населения, человек</SectionTitle>
          <PopulationGrid>
            <ChartCard>
              <ChartArea>
                <YAxis>
                  {TICKS.map(v => (
                    <li key={v}>{v}</li>
                  ))}
                </YAxis>
                <LineLayer>
                  {TICKS.slice(0, 5).map(v => (
                    <GridLine key={v} />
                  ))}
                </LineLayer>
                <ColumnLayer>
                  <Column>
                    <ColumnPart $color={LIGHT} style={{ height: '16.79%' }} />
                    <ColumnPart $color={DARK} style={{ flex: 1 }} />
                  </Column>
                </ColumnLayer>
                <MenuLayer>
                  <ChartMenuSlot>
                    <Menu />
                  </ChartMenuSlot>
                </MenuLayer>
              </ChartArea>
              <AxisName>Measure Names</AxisName>
              <SeriesLegend>
                <SeriesItem $color={LIGHT}>Численность детей (2020)</SeriesItem>
                <SeriesItem $color={DARK}>Число взрослых (2020)</SeriesItem>
              </SeriesLegend>
            </ChartCard>
            <Indicators>
              {INDICATORS.map(i => (
                <Card key={i.title}>
                  <CardHead $right={23}>
                    <CardTitle>{i.title}</CardTitle>
                    <Menu />
                  </CardHead>
                  <IndicatorValue $color={i.color}>{i.value}</IndicatorValue>
                </Card>
              ))}
            </Indicators>
          </PopulationGrid>
        </Population>
      </TopGrid>

      <BottomGrid>
        <BarsCard>
          <CardHead>
            <CardTitle>Муниципальные образования</CardTitle>
            <Menu />
          </CardHead>
          <BarsArea>
            <BarLabels>
              {MUNICIPALITIES.map(([name]) => (
                <li key={name}>{name}</li>
              ))}
            </BarLabels>
            <BarGrid>
              {Array.from({ length: 10 }, (_, i) => (
                <BarGridCell key={i} />
              ))}
            </BarGrid>
            <Bars>
              {MUNICIPALITIES.map(([name, adults]) => (
                <BarRow key={name}>
                  <BarPart $color={DARK} style={{ width: `${adults}%` }} />
                  {adults < 100 && <BarPart $color={LIGHT} />}
                </BarRow>
              ))}
            </Bars>
          </BarsArea>
        </BarsCard>

        <Card>
          <CardHead $left={28} $right={24}>
            <CardTitle>Населённые пункты</CardTitle>
            <Menu lift />
          </CardHead>
          <TableArea>
            <DataTable>
              <colgroup>
                <col style={{ width: '35.8%' }} />
                <col style={{ width: '22.8%' }} />
                <col style={{ width: '22%' }} />
                <col />
              </colgroup>
              <thead>
                <tr>
                  <Th scope="col">Населённые пункты</Th>
                  <Th scope="col">Муниципальное образование</Th>
                  <Th scope="col">Численность детей (2020)</Th>
                  <Th scope="col">Доля детей в населении (2020)</Th>
                </tr>
              </thead>
              <tbody>
                {SETTLEMENTS.map(s => (
                  <tr key={s.name}>
                    <Td>{s.name}</Td>
                    <Td>{s.area}</Td>
                    <Td $align="right">{s.kids}</Td>
                    <Td $align="right" $fill={s.fill}>{s.share}</Td>
                  </tr>
                ))}
              </tbody>
            </DataTable>
            <ScrollTrack>
              <svg width="18" height="10" viewBox="0 0 18 10" fill="#e4e4e4">
                <path d="M9 0L18 10H0Z" />
              </svg>
              <ScrollThumb />
            </ScrollTrack>
          </TableArea>
        </Card>
      </BottomGrid>
    </Page>
  );
}
